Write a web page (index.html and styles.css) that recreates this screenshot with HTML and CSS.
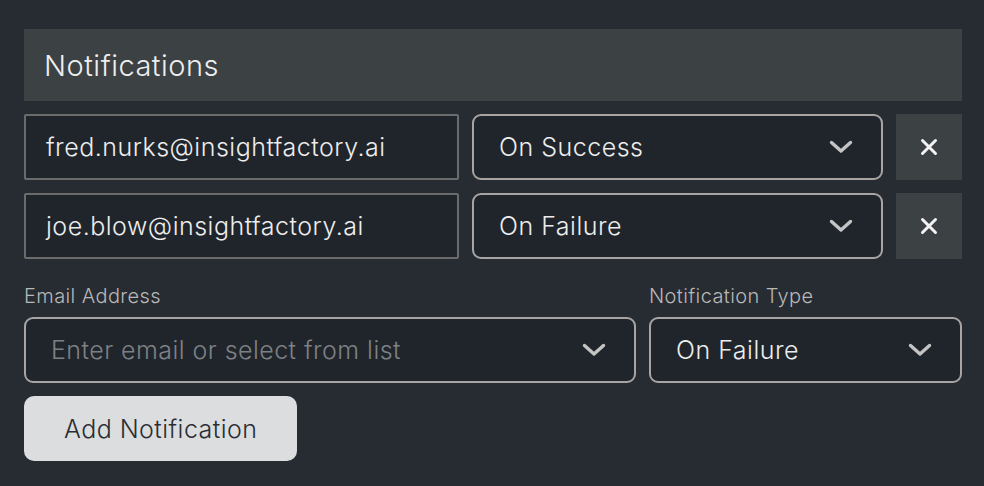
FILE: index.html
```html
<!DOCTYPE html>
<html lang="en">
<head>
<meta charset="utf-8">
<title>Notifications</title>
<link rel="stylesheet" href="styles.css">
</head>
<body>
<section class="panel">
  <header class="panel-head">Notifications</header>
  <div class="rows">
    <div class="row">
      <div class="field-box email">fred.nurks@insightfactory.ai</div>
      <div class="field-box select">
        <span>On Success</span>
        <svg class="chev" viewBox="0 0 24 14" width="24" height="14"><path d="M2.5 2.5 L12 11 L21.5 2.5" fill="none" stroke="currentColor" stroke-width="3.4" stroke-linecap="round" stroke-linejoin="round"/></svg>
      </div>
      <button class="remove" aria-label="Remove">
        <svg viewBox="0 0 18 18" width="18" height="18"><path d="M2.5 2.5 L15.5 15.5 M15.5 2.5 L2.5 15.5" fill="none" stroke="currentColor" stroke-width="3" stroke-linecap="round"/></svg>
      </button>
    </div>
    <div class="row">
      <div class="field-box email">joe.blow@insightfactory.ai</div>
      <div class="field-box select">
        <span>On Failure</span>
        <svg class="chev" viewBox="0 0 24 14" width="24" height="14"><path d="M2.5 2.5 L12 11 L21.5 2.5" fill="none" stroke="currentColor" stroke-width="3.4" stroke-linecap="round" stroke-linejoin="round"/></svg>
      </div>
      <button class="remove" aria-label="Remove">
        <svg viewBox="0 0 18 18" width="18" height="18"><path d="M2.5 2.5 L15.5 15.5 M15.5 2.5 L2.5 15.5" fill="none" stroke="currentColor" stroke-width="3" stroke-linecap="round"/></svg>
      </button>
    </div>
  </div>
  <div class="new-row">
    <label class="group">
      <span class="label">Email Address</span>
      <div class="field-box select">
        <span class="placeholder">Enter email or select from list</span>
        <svg class="chev" viewBox="0 0 24 14" width="24" height="14"><path d="M2.5 2.5 L12 11 L21.5 2.5" fill="none" stroke="currentColor" stroke-width="3.4" stroke-linecap="round" stroke-linejoin="round"/></svg>
      </div>
    </label>
    <label class="group">
      <span class="label">Notification Type</span>
      <div class="field-box select">
        <span>On Failure</span>
        <svg class="chev" viewBox="0 0 24 14" width="24" height="14"><path d="M2.5 2.5 L12 11 L21.5 2.5" fill="none" stroke="currentColor" stroke-width="3.4" stroke-linecap="round" stroke-linejoin="round"/></svg>
      </div>
    </label>
  </div>
  <button class="add">Add Notification</button>
</section>
</body>
</html>
```
FILE: styles.css
```css
* { box-sizing: border-box; }
html, body { margin: 0; }
body {
  background: #272b32;
  font-family: Inter, "Noto Sans", sans-serif;
  color: #e6e6e6;
  width: 984px;
  height: 486px;
  overflow: hidden;
}
.panel {
  padding: 29px 22px 0 24px;
  display: flex;
  flex-direction: column;
}
.panel-head {
  height: 72px;
  background: #3c4144;
  color: #eeeeee;
  font-size: 29px;
  font-weight: 350;
  letter-spacing: 0.5px;
  padding-left: 20px;
  display: flex;
  align-items: center;
}
.rows {
  margin-top: 13px;
  display: flex;
  flex-direction: column;
  gap: 13px;
}
.row {
  display: grid;
  grid-template-columns: 435px 411px 66px;
  gap: 13px;
}
.field-box {
  height: 66px;
  background: #20252c;
  border: 2px solid #6b6b6b;
  border-radius: 2px;
  font-size: 25px;
  font-weight: 300;
  letter-spacing: 0.5px;
  color: #ededed;
  display: flex;
  align-items: center;
  padding: 0 20px;
  white-space: nowrap;
}
.field-box.select {
  border-color: #a8a4a2;
  border-radius: 9px;
  padding: 0 28px 0 25px;
  justify-content: space-between;
}
.chev { color: #c4c4c4; flex: none; }
.remove {
  height: 66px;
  border: 0;
  padding: 0;
  background: #3c4144;
  color: #f2f2f2;
  display: flex;
  align-items: center;
  justify-content: center;
}
.new-row {
  margin-top: 25px;
  display: grid;
  grid-template-columns: 612px 313px;
  gap: 13px;
}
.group { display: flex; flex-direction: column; gap: 9px; }
.label {
  font-size: 20px;
  font-weight: 300;
  letter-spacing: 0.4px;
  line-height: 24px;
  color: #b8b8b8;
}
.placeholder { color: #7e8184; letter-spacing: 0.45px; }
.add {
  margin-top: 13px;
  align-self: flex-start;
  height: 65px;
  padding: 0 40px;
  border: 0;
  border-radius: 10px;
  background: #dcdddf;
  color: #2a2d33;
  font-family: Inter, "Noto Sans", sans-serif;
  font-size: 25px;
  font-weight: 300;
  letter-spacing: 0.45px;
}
```
